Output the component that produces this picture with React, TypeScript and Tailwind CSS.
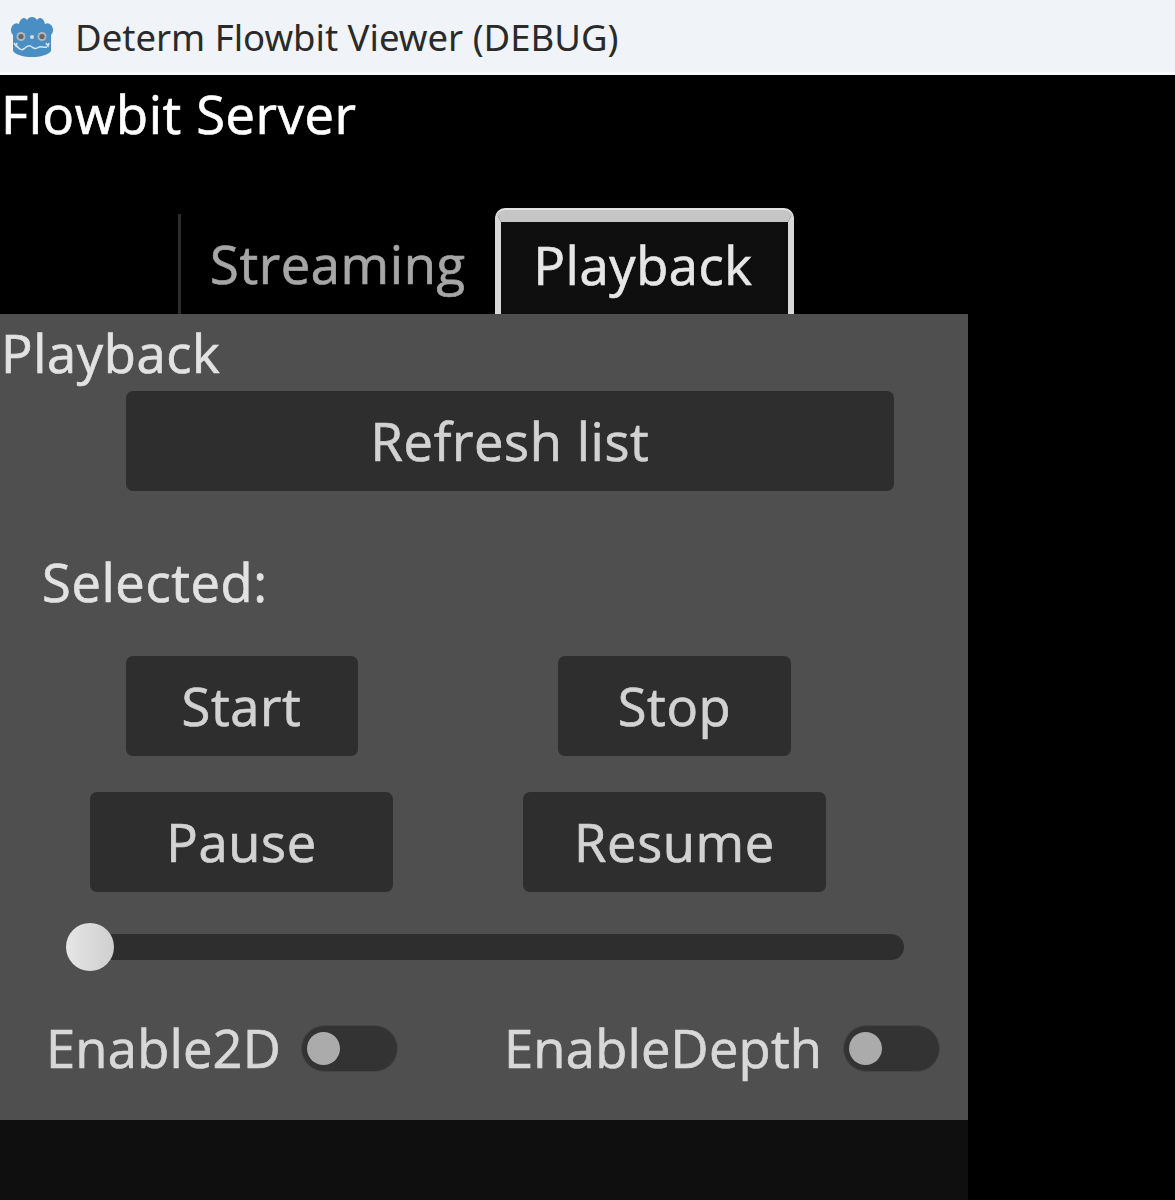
const uiFont = "font-['Open_Sans','Noto_Sans',sans-serif]";
const strokeText = "text-[52.5px] leading-none [-webkit-text-stroke:0.7px_currentColor]";
const heavyText = `${strokeText} tracking-[0.6px]`;

function ActionButton({ label, className }: { label: string; className: string }) {
    return (
        <button className={`flex h-[100px] items-center justify-center rounded-[7px] bg-[#2e2e2e] pt-[1px] text-[#d2d2d2] ${heavyText} ${className}`}>
            {label}
        </button>
    );
}

function Toggle() {
    return (
        <span className="flex h-[45px] w-[95px] shrink-0 items-center rounded-full bg-[#333333] pl-[5px] ring-1 ring-[#454545]">
            <span className="h-[33px] w-[33px] rounded-full bg-[#ababab]" />
        </span>
    );
}

function GodotIcon() {
    return (
        <svg viewBox="0 0 48 48" className="h-[48px] w-[48px]">
            <path
                fill="#4a8fc4"
                d="M3 16C4 11 8 9 11 11C12 5 17 3 19 7C21 3 27 3 29 7C31 3 36 5 37 11C40 9 44 11 45 16C45.5 19 44 21 43 22L43 38C37 46 11 46 5 38L5 22C4 21 2.5 19 3 16Z"
            />
            <circle cx="13" cy="23.5" r="4.5" fill="#aeb6bd" />
            <circle cx="34" cy="23.5" r="4.5" fill="#aeb6bd" />
            <circle cx="13" cy="23.5" r="2.6" fill="#666666" />
            <circle cx="34" cy="23.5" r="2.6" fill="#666666" />
            <circle cx="24" cy="24" r="2" fill="#d5dde3" />
            <path
                fill="none"
                stroke="#dfe6ec"
                strokeWidth="1.5"
                d="M6 30L8 33L9 30M41 30L40 33L38 30M9 33C12 38 15 37 17 35C20 32 22 32 24 34C26 36 28 36 31 34C33 33 36 35 39 34"
            />
        </svg>
    );
}

export default function App() {
    return (
        <div className={`flex h-[1200px] w-[1175px] flex-col overflow-hidden bg-black ${uiFont}`}>
            {/* Window title bar */}
            <header className="flex h-[75px] shrink-0 items-center gap-[19px] border-b-[3px] border-[#f9fafb] bg-[#f0f4f8] pl-[8px] pt-[2px]">
                <GodotIcon />
                <span className="font-['Noto_Sans',sans-serif] text-[36.5px] leading-none text-[#2a2a2a]">Determ Flowbit Viewer (DEBUG)</span>
            </header>

            <h1 className={`h-[133px] shrink-0 pt-[9px] pl-[1px] text-white ${heavyText}`}>
                <span className="block leading-[60px]">Flowbit Server</span>
            </h1>

            {/* Tabs */}
            <div className="flex h-[106px] shrink-0 items-end pl-[178px]">
                <div className="h-[100px] w-[3px] bg-[#2c2c2c]" />
                <div className={`flex h-[106px] w-[314px] items-center pl-[29px] pt-[6px] text-[#a6a6a6] ${heavyText}`}>Streaming</div>
                <div className={`flex h-[104px] w-[299px] items-center justify-center rounded-t-[10px] border-x-[6px] border-t-[12px] border-x-[#d8d8d8] border-t-[#c6c6c6] bg-[#0f0f0f] pr-[3px] pb-[6px] text-[#e6e6e6] shadow-[0_-2px_0_#e2e2e2] ${heavyText}`}>Playback</div>
            </div>

            {/* Panel */}
            <section className="h-[806px] w-[968px] shrink-0 bg-[#4f4f4f]">
                <h2 className={`h-[77px] pl-[1px] pt-[9px] text-[#e2e2e2] ${heavyText}`}>
                    <span className="block leading-[60px]">Playback</span>
                </h2>
                <ActionButton label="Refresh list" className="ml-[126px] w-[768px]" />
                <p className={`ml-[42px] h-[165px] pt-[60px] text-[#e2e2e2] ${heavyText}`}>
                    <span className="block leading-[62px]">Selected:</span>
                </p>

                <div className="ml-[25px] grid w-[866px] grid-cols-2 gap-y-[36px] justify-items-center">
                    <ActionButton label="Start" className="w-[232px]" />
                    <ActionButton label="Stop" className="w-[233px]" />
                    <ActionButton label="Pause" className="w-[303px]" />
                    <ActionButton label="Resume" className="w-[303px]" />
                </div>

                {/* Slider */}
                <div className="mt-[31px] ml-[66px] flex h-[48px] w-[838px] items-center">
                    <span className="z-10 h-[48px] w-[48px] shrink-0 rounded-full bg-linear-to-r from-[#e6e6e6] to-[#cfcfcf]" />
                    <span className="-ml-[24px] h-[26px] grow rounded-full bg-[#2e2e2e]" />
                </div>

                <div className={`mt-[51px] flex items-center pl-[46px] tracking-[0.2px] text-[#d8d8d8] ${strokeText}`}>
                    <span className="w-[256px] shrink-0">Enable2D</span>
                    <Toggle />
                    <span className="ml-[107px] w-[340px] shrink-0">EnableDepth</span>
                    <Toggle />
                </div>
            </section>

            <div className="w-[968px] grow bg-[#0f0f0f]" />
        </div>
    );
}
